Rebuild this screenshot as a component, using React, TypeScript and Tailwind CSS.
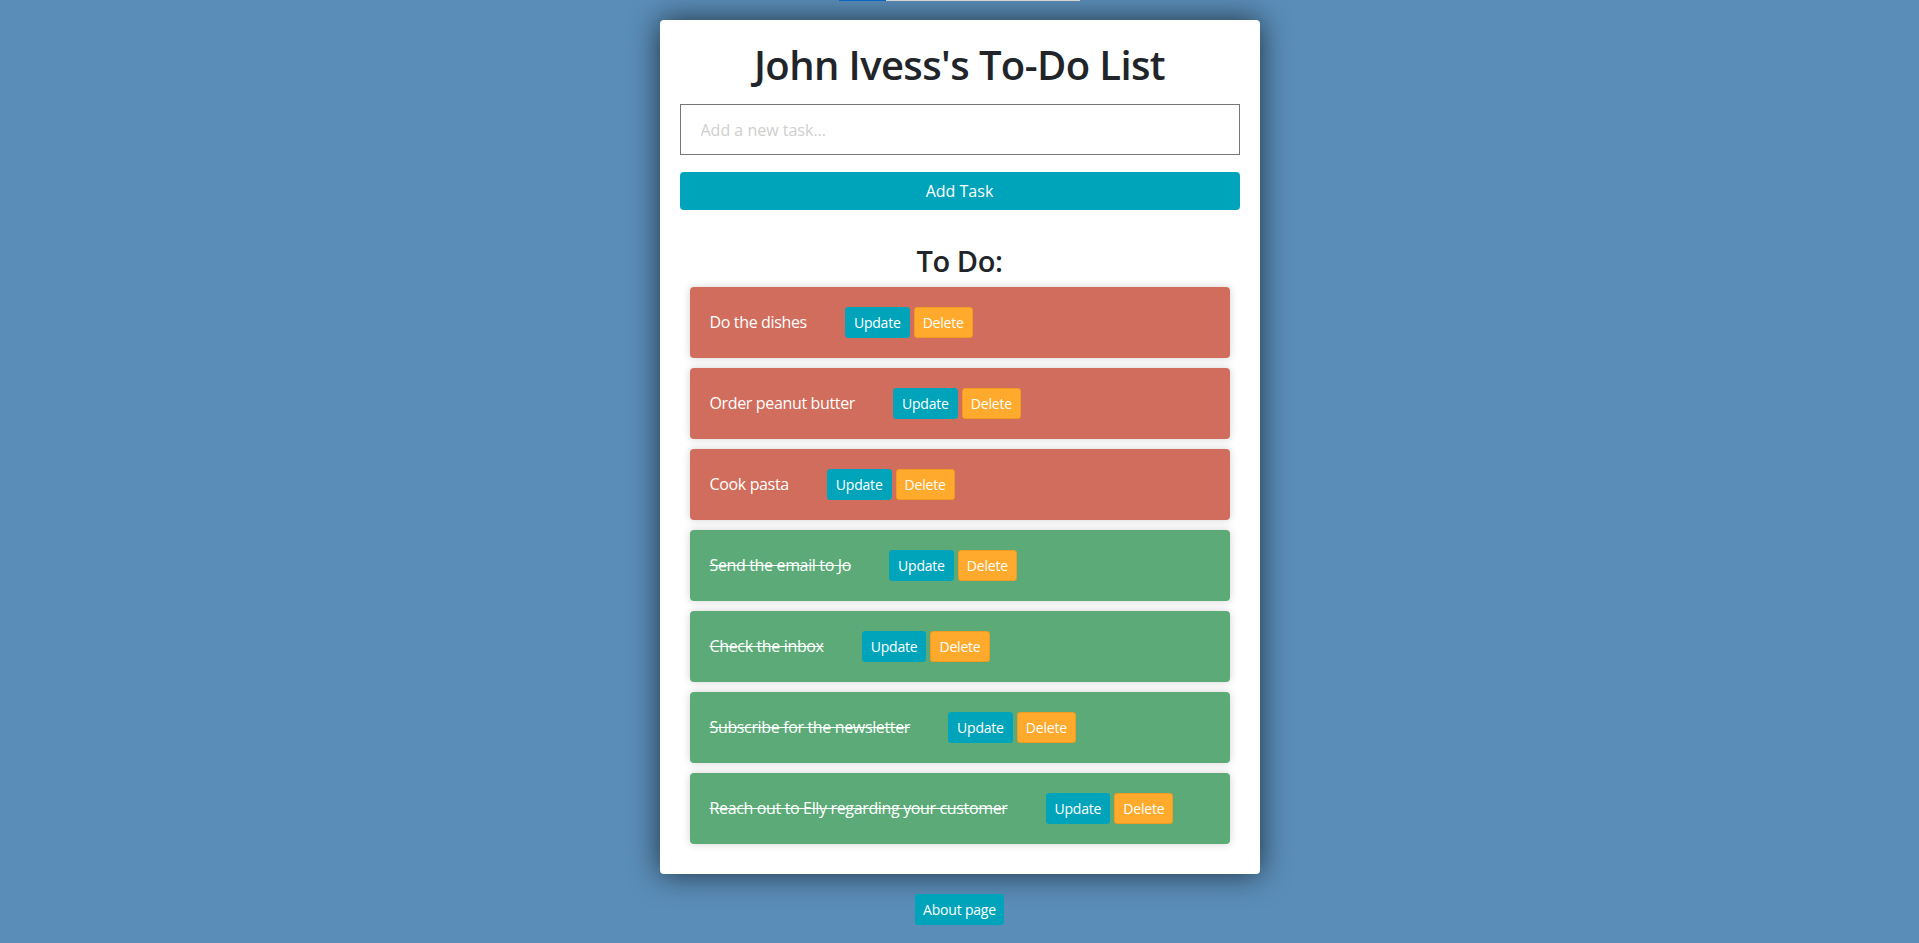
const tasks = [
  { text: "Do the dishes", done: false },
  { text: "Order peanut butter", done: false },
  { text: "Cook pasta", done: false },
  { text: "Send the email to Jo", done: true },
  { text: "Check the inbox", done: true },
  { text: "Subscribe for the newsletter", done: true },
  { text: "Reach out to Elly regarding your customer", done: true },
];

function TaskItem({ text, done }: { text: string; done: boolean }) {
  return (
    <li
      className={`flex h-[71px] items-center rounded-[4px] px-5 text-[16px] text-white shadow-[0_0_8px_rgba(0,0,0,0.18)] ${
        done ? "bg-[#5baa78]" : "bg-[#d06d5c]"
      }`}
    >
      <span className={`mr-[38px] tracking-[-0.35px] ${done ? "line-through" : ""}`}>{text}</span>
      <button className="h-[31px] rounded-[3px] border border-[#00a4ba] bg-[#00a4ba] px-2 text-[14px] tracking-[-0.2px] text-white">
        Update
      </button>
      <button className="ml-1 h-[31px] rounded-[3px] border border-[#f09c22] bg-[#ffaa2c] px-2 text-[14px] tracking-[-0.2px] text-white">
        Delete
      </button>
    </li>
  );
}

export default function App() {
  return (
    <div className="min-h-[943px] bg-[#5a8db8] font-['Segoe_UI','Open_Sans',sans-serif] text-[#212529]">
      {/* leftover bottom edge of a nav that's scrolled off */}
      <div className="flex h-px justify-center">
        <div className="w-[47px] bg-[#0b63c4]" />
        <div className="w-[194px] bg-[#d4d4d4]" />
      </div>

      <div className="mx-auto mt-[19px] w-[600px] rounded-[4px] bg-white px-5 pb-[30px] pt-[21px] shadow-[0_0_30px_rgba(0,0,0,0.65)]">
        <h1 className="mb-[15px] text-center text-[40px] font-[550] leading-[1.2] tracking-[-0.6px]">
          John Ivess's To-Do List
        </h1>
        <input
          type="text"
          placeholder="Add a new task..."
          className="block h-[51px] w-full border border-[#767676] px-5 text-[16px] outline-none placeholder:text-[#cfcfcf]"
        />
        <button className="mt-[17px] block h-[38px] w-full rounded-[4px] bg-[#00a4ba] text-[16px] text-white">
          Add Task
        </button>

        <h2 className="mb-[8px] mt-[34px] text-center text-[29px] font-[550] leading-[1.2] tracking-[-0.4px]">
          To Do:
        </h2>
        <ul className="flex flex-col gap-[10px] px-[10px]">
          {tasks.map((t) => (
            <TaskItem key={t.text} text={t.text} done={t.done} />
          ))}
        </ul>
      </div>

      <div className="mt-5 flex justify-center">
        <button className="h-[31px] rounded-[3px] bg-[#00a4ba] px-2 text-[14px] tracking-[-0.2px] text-white">
          About page
        </button>
      </div>
    </div>
  );
}
